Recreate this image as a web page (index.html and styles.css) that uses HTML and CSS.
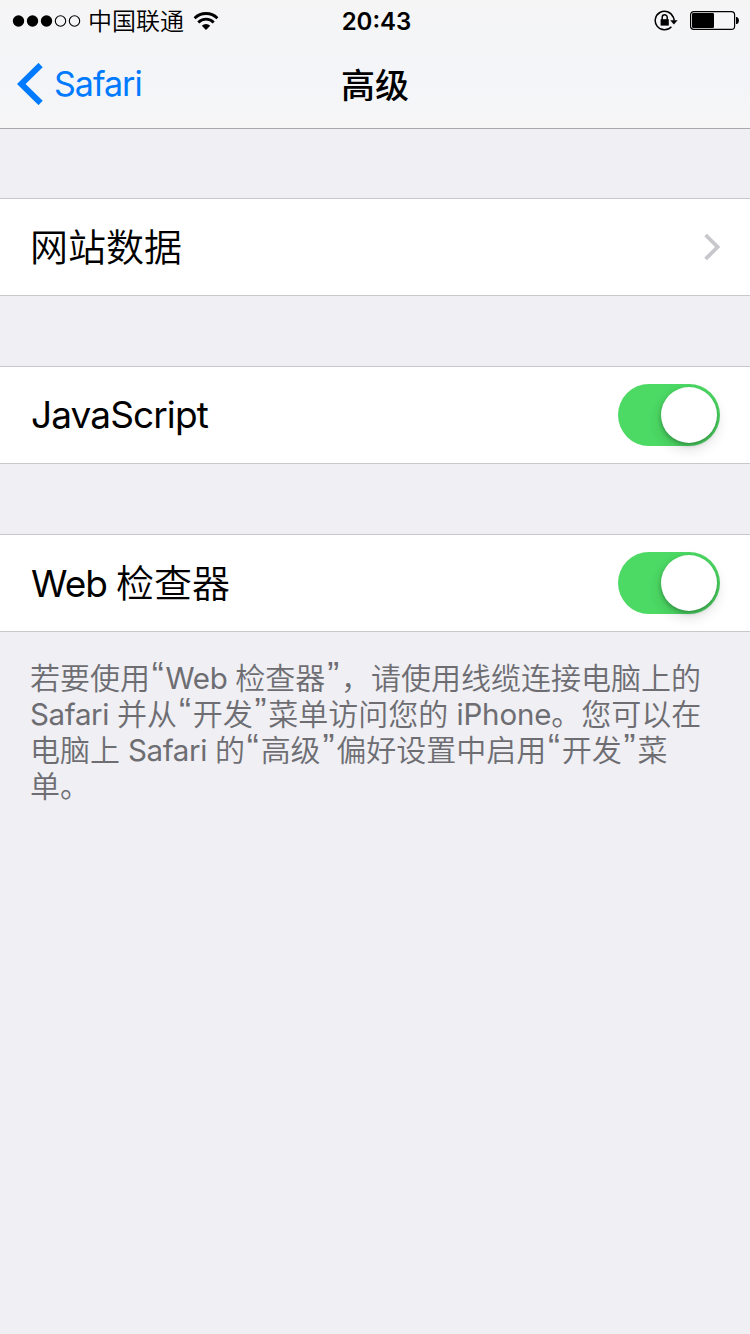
FILE: index.html
```html
<!DOCTYPE html>
<html lang="zh-CN">
<head>
<meta charset="utf-8">
<title>高级</title>
<link rel="stylesheet" href="styles.css">
</head>
<body>
<header class="top">
  <div class="status">
    <div class="status-left">
      <svg class="signal" width="70" height="14" viewBox="0 0 70 14">
        <circle cx="6.5" cy="7" r="5.7"/><circle cx="20.5" cy="7" r="5.7"/><circle cx="34.5" cy="7" r="5.7"/>
        <g fill="none" stroke="#000" stroke-width="1.1"><circle cx="48.5" cy="7" r="5.2"/><circle cx="62.5" cy="7" r="5.2"/></g>
      </svg>
      <span class="carrier">中国联通</span>
      <svg class="wifi" width="26" height="20" viewBox="0 0 26 20">
        <g fill="none" stroke="#000" stroke-width="2.8"><path d="M1.6 7.2a16.2 16.2 0 0 1 22.800 0"/><path d="M5.300 11.400a10.900 10.900 0 0 1 15.400 0"/></g>
        <path d="M8.800 14.800a6 6 0 0 1 8.400 0L13 19z"/>
      </svg>
    </div>
    <span class="clock">20:43</span>
    <div class="status-right">
      <svg width="24" height="22" viewBox="0 0 24 22">
        <path d="M19.200 7.200A9.300 9.300 0 1 0 17.400 16.800M19.200 6.800q.9 2 .9 4" fill="none" stroke="#000" stroke-width="1.500"/>
        <path d="M16.200 10.200h7.400l-3.700 4.200z"/>
        <rect x="6.600" y="9.200" width="8.200" height="6.400"/>
        <path d="M8.200 10V7.200a2.500 2.500 0 0 1 5 0V10" fill="none" stroke="#000" stroke-width="1.500"/>
      </svg>
      <svg class="battery" width="50" height="20" viewBox="0 0 50 20">
        <rect x=".6" y="1.600" width="44" height="17.800" rx="3.200" fill="none" stroke="#000" stroke-width="1.200"/>
        <rect x="2" y="3" width="22" height="15" rx="1.200"/>
        <path d="M46 7h1q2 1 2 3.500t-2 3.500h-1z"/>
      </svg>
    </div>
  </div>
  <nav class="nav">
    <a class="back">
      <svg width="26" height="42" viewBox="0 0 26 42"><path d="M23.600 2L4.200 21l19.400 19" fill="none" stroke="#007aff" stroke-width="6"/></svg>
      <span class="back-label">Safari</span>
    </a>
    <h1 class="title">高级</h1>
  </nav>
</header>
<main class="content">
  <section class="row">
    <span class="label">网站数据</span>
    <svg class="chevron" width="16" height="28" viewBox="0 0 16 28"><path d="M1.600 2L13.600 14 1.600 26" fill="none" stroke="#c7c7cc" stroke-width="3.800"/></svg>
  </section>
  <section class="row">
    <span class="label"><span class="label-latin">JavaScript</span></span>
    <span class="switch"><span class="knob"></span></span>
  </section>
  <section class="row">
    <span class="label"><span class="label-latin">Web</span><span>检查器</span></span>
    <span class="switch"><span class="knob"></span></span>
  </section>
  <p class="note">
    <span class="line">若要使用<span class="q">“</span><span class="latin">Web </span>检查器<span class="q">”</span>，请使用线缆连接电脑上的</span>
    <span class="line"><span class="latin">Safari </span>并从<span class="q">“</span>开发<span class="q">”</span>菜单访问您的<span class="latin-wide"> iPhone</span>。您可以在</span>
    <span class="line">电脑上<span class="latin"> Safari </span>的<span class="q">“</span>高级<span class="q">”</span>偏好设置中启用<span class="q">“</span>开发<span class="q">”</span>菜</span>
    <span class="line">单。</span>
  </p>
</main>
</body>
</html>
```
FILE: styles.css
```css
* { box-sizing: border-box; }
body {
  margin: 0;
  min-height: 1334px;
  background: #efeff4;
  color: #000;
  font-family: Inter, "Noto Sans CJK SC DemiLight", "Noto Sans CJK SC", sans-serif;
  overflow: hidden;
}
svg { display: block; flex: none; }
.top {
  height: 129px;
  background: linear-gradient(#f5f5f6, #f4f5f8 60%, #f6f6f7);
  border-bottom: 1px solid #a9a9ad;
}
.status {
  display: grid;
  grid-template-columns: 1fr auto 1fr;
  height: 40px;
  align-items: center;
  padding: 0 10px 0 12px;
}
.status-left, .status-right { display: flex; align-items: center; }
.status-right { justify-content: flex-end; gap: 12px; }
.carrier { font-size: 24px; font-weight: 350; line-height: 40px; margin-left: 6px; padding-top: 2px; }
.wifi { margin-left: 9px; margin-bottom: 1px; }
.battery { margin-bottom: 2px; }
.clock { font-size: 24px; font-weight: 600; line-height: 40px; padding-top: 1px; padding-left: 1px; }
.nav {
  display: grid;
  grid-template-columns: 1fr auto 1fr;
  height: 88px;
  align-items: center;
}
.back { display: flex; align-items: center; gap: 11px; padding-left: 17px; color: #007aff; }
.back-label { font-size: 34px; font-weight: 380; line-height: 44px; letter-spacing: -1px; }
.title { margin: 0; font-family: Inter, "Noto Sans CJK SC", sans-serif; font-size: 34px; line-height: 50px; font-weight: 500; padding-top: 3px; }
.content { padding-top: 69px; }
.row {
  display: flex;
  align-items: center;
  justify-content: space-between;
  height: 98px;
  margin-bottom: 70px;
  padding: 0 30px;
  background: #fff;
  border-top: 1px solid #c8c7cc;
  border-bottom: 1px solid #c8c7cc;
}
.label {
  display: flex;
  align-items: baseline;
  gap: 9px;
  font-size: 38px;
  font-weight: 350;
  line-height: 56px;
  white-space: nowrap;
}
.label-latin { padding-left: 1px; font-size: 37px; font-weight: 380; letter-spacing: -0.9px; }
.switch {
  display: flex;
  justify-content: flex-end;
  width: 102px;
  height: 62px;
  padding: 3px;
  border-radius: 31px;
  background: #4cd964;
}
.knob {
  width: 56px;
  height: 56px;
  border-radius: 50%;
  background: #fff;
  box-shadow: 0 6px 14px rgba(0, 0, 0, .14), 0 2px 4px rgba(0, 0, 0, .26);
}
.note {
  margin: -42px 0 0;
  padding-left: 30px;
  color: #6d6d72;
  font-size: 30px;
  font-weight: 350;
  line-height: 36px;
}
.line { display: block; white-space: nowrap; height: 36px; }
.latin, .latin-wide { font-weight: 370; font-size: 29.5px; white-space: pre; }
.latin { letter-spacing: -0.35px; }
.latin-wide { letter-spacing: -0.15px; }
.q {
  display: inline-block;
  width: 15.6px;
  text-align: center;
  font-family: "Liberation Sans", sans-serif;
  font-size: 36px;
  line-height: 20px;
  vertical-align: 1px;
}
```
